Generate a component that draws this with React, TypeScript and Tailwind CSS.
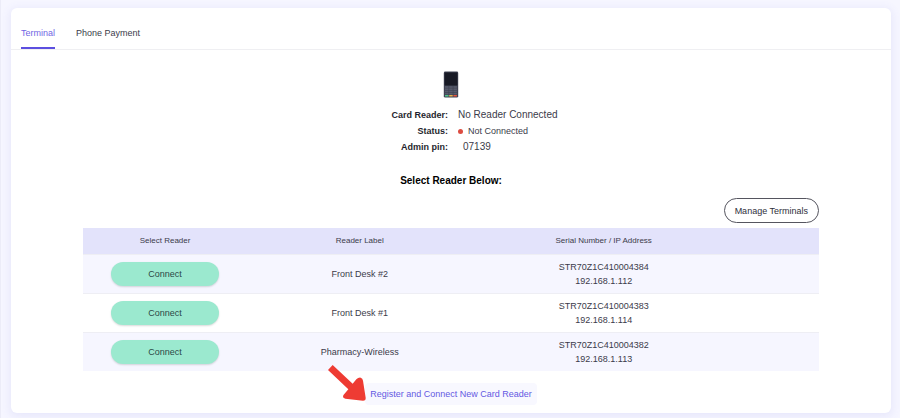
import { clsx } from 'clsx';

const tabs = [
  { label: 'Terminal', active: true },
  { label: 'Phone Payment', active: false },
];

const readers = [
  { label: 'Front Desk #2', serial: 'STR70Z1C410004384', ip: '192.168.1.112' },
  { label: 'Front Desk #1', serial: 'STR70Z1C410004383', ip: '192.168.1.114' },
  { label: 'Pharmacy-Wireless', serial: 'STR70Z1C410004382', ip: '192.168.1.113' },
];

const CardReaderIcon = () => {
  const keys = [0, 1, 2, 3].flatMap((row) => [0, 1, 2].map((col) => ({ row, col })));

  return (
    <svg className="w-4 h-7" viewBox="0 0 16 28" aria-hidden="true">
      <rect x="0.8" y="0.6" width="14.4" height="26" rx="1.4" fill="#3f4252" />
      <rect x="1.6" y="1.6" width="12.8" height="12.8" rx="0.4" fill="#181a25" />
      {keys.map(({ row, col }) => (
        <rect
          key={`${row}-${col}`}
          x={2 + col * 4.2}
          y={15.2 + row * 2.2}
          width="3.5"
          height="1.6"
          fill="#565a6b"
        />
      ))}
      <rect x="2" y="24" width="3.5" height="1.5" fill="#4fc48c" />
      <rect x="6.2" y="24" width="3.5" height="1.5" fill="#e6b04a" />
      <rect x="10.4" y="24" width="3.5" height="1.5" fill="#e6553f" />
    </svg>
  );
};

const PointerArrow = () => (
  <svg
    className="absolute -left-[37px] -top-[18px] w-[38px] h-9 pointer-events-none"
    viewBox="0 0 114 108"
    aria-hidden="true"
  >
    <path
      d="M14 0 L74 56 L85 43 Q91 37 98 38 Q104 40 105 47 L113 98 Q114 107 105 107 L52 101 Q44 99 45 94 Q46 90 49 87 L61 73 L0 15 Z"
      fill="#ee3b33"
    />
  </svg>
);

export default function App() {
  return (
    <div className="bg-[#f6f6ff] border-l border-[#ececf8] pt-2 pb-[5px] pl-[10px] pr-[9px] font-['Liberation_Sans',Arial,sans-serif] text-[9px] leading-[14px] text-[#3b3b4a]">
      <main className="bg-white rounded-md shadow-[0_2px_8px_2px_#e8e8fb]">
        <nav className="flex gap-[21px] px-[10px] pt-4 border-b border-[#efeff2]">
          {tabs.map((tab) => (
            <button
              key={tab.label}
              className={clsx(
                'pt-[2px] pb-[7px] border-b-2',
                tab.active ? 'border-[#5c4fe0] text-[#7065e4]' : 'border-transparent',
              )}
            >
              {tab.label}
            </button>
          ))}
        </nav>

        <section className="flex flex-col items-center pt-[21px]">
          <CardReaderIcon />
          <dl className="grid grid-cols-2 w-full pt-2 leading-4">
            <dt className="pr-[3px] text-right font-bold text-[#1f1f2e]">Card Reader:</dt>
            <dd className="pl-[7px] text-[10px]">No Reader Connected</dd>
            <dt className="pr-[3px] text-right font-bold text-[#1f1f2e]">Status:</dt>
            <dd className="pl-[7px] flex items-center gap-[5px]">
              <span className="w-[5px] h-[5px] rounded-full bg-[#dc4c41]" />
              Not Connected
            </dd>
            <dt className="pr-[3px] text-right font-bold text-[#1f1f2e]">Admin pin:</dt>
            <dd className="pl-3 text-[10px]">07139</dd>
          </dl>
          <h2 className="pt-[19px] text-[10px] font-bold text-black">Select Reader Below:</h2>
        </section>

        <section className="px-[72px] pt-[10px] pb-2">
          <div className="flex justify-end pb-[5px]">
            <button className="h-[25px] px-[10px] rounded-full border border-[#55555f] bg-white text-[#2f2f3c]">
              Manage Terminals
            </button>
          </div>

          <table className="w-full table-fixed border-collapse text-center">
            <colgroup>
              <col className="w-[22.3%]" />
              <col className="w-[30.6%]" />
              <col className="w-[35.7%]" />
              <col />
            </colgroup>
            <thead>
              <tr className="h-[26px] bg-[#e3e3fb] text-[8px]">
                <th className="font-normal">Select Reader</th>
                <th className="font-normal">Reader Label</th>
                <th className="font-normal">Serial Number / IP Address</th>
                <td />
              </tr>
            </thead>
            <tbody>
              {readers.map((reader) => (
                <tr
                  key={reader.serial}
                  className="h-[39px] border-t border-[#eeeef4] odd:bg-[#f6f6ff]"
                >
                  <td>
                    <button className="w-[108px] h-6 rounded-full bg-[#9be9cf] shadow-[0_1px_2px_#00000026] text-[#2c4a47]">
                      Connect
                    </button>
                  </td>
                  <td>{reader.label}</td>
                  <td>
                    <div>{reader.serial}</div>
                    <div>{reader.ip}</div>
                  </td>
                  <td />
                </tr>
              ))}
            </tbody>
          </table>

          <div className="flex justify-center pt-3">
            <div className="relative">
              <a
                href="#register"
                className="block px-[5px] py-1 rounded-sm bg-[#f8f8ff] text-[#6459e2]"
              >
                Register and Connect New Card Reader
              </a>
              <PointerArrow />
            </div>
          </div>
        </section>
      </main>
    </div>
  );
}
